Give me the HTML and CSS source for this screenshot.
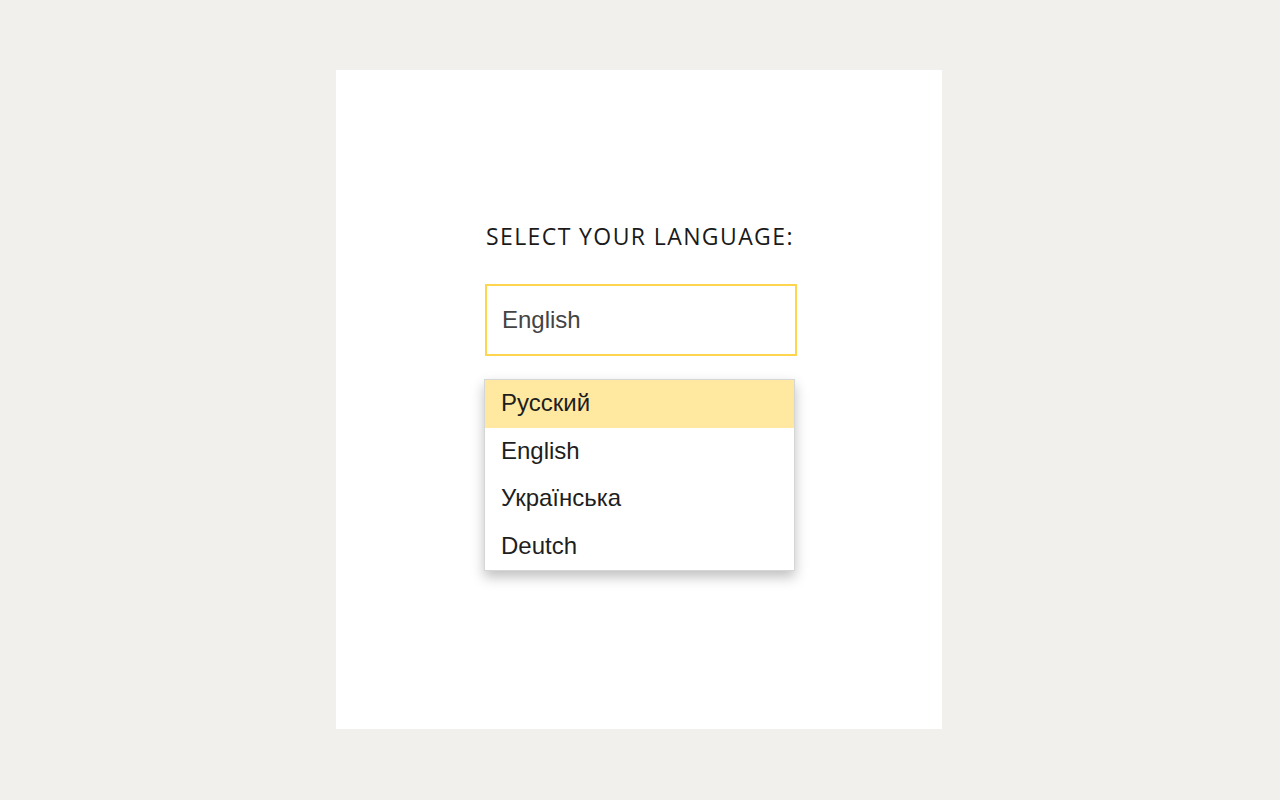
FILE: index.html
```html
<!DOCTYPE html>
<html lang="en">
<head>
    <meta charset="UTF-8">
    <meta name="viewport" content="width=device-width, initial-scale=1.0">
    <title>Select language</title>
    <link rel="stylesheet" href="styles.css">
</head>
<body>
    <div class="card">
        <div class="picker">
            <h2 class="picker-title">SELECT YOUR LANGUAGE:</h2>
            <div class="picker-field">English</div>
            <ul class="picker-list">
                <li class="picker-item active">Русский</li>
                <li class="picker-item">English</li>
                <li class="picker-item">Українська</li>
                <li class="picker-item">Deutch</li>
            </ul>
        </div>
    </div>
</body>
</html>
```

FILE: styles.css
```css
body {
    margin: 0;
    padding: 0;
    background: #f1f0ec;
    font-family: "Liberation Sans", Arial, sans-serif;
}
.card {
    width: 606px;
    height: 659px;
    margin: 70px 0 0 336px;
    background: #fff;
    box-sizing: border-box;
    padding: 150px 0 0 148px;
}
.picker {
    width: 313px;
}
.picker-title {
    margin: 0 0 32px 2px;
    font-family: "Open Sans", "Noto Sans", sans-serif;
    font-weight: 400;
    font-size: 23px;
    line-height: 32px;
    letter-spacing: 1.4px;
    color: #1a1a1a;
    white-space: nowrap;
}
.picker-field {
    height: 72px;
    box-sizing: border-box;
    border: 2px solid #ffd54f;
    padding: 0 15px;
    display: flex;
    align-items: center;
    font-size: 24px;
    color: #444;
    margin-left: 1px;
}
.picker-list {
    list-style: none;
    margin: 23px 2px 0 0;
    padding: 0;
    border: 1px solid #d6d6d6;
    box-shadow: 0 6px 12px rgba(0, 0, 0, 0.25);
}
.picker-item {
    height: 47.5px;
    line-height: 46px;
    padding: 0 16px;
    font-size: 24px;
    color: #1e1e1e;
}
.picker-item.active {
    background: #ffe9a0;
}
```
